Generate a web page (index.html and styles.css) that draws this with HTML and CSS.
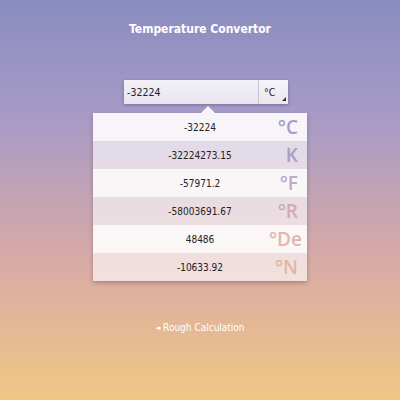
FILE: index.html
```html
<!DOCTYPE html>
<html>
<head>
<meta charset="utf-8">
<link rel="stylesheet" href="styles.css">
</head>
<body>
<div class="page">
  <h1 class="title">Temperature Convertor</h1>
  <div class="inputrow">
    <div class="field">-32224</div>
    <div class="unitsel">°C<span class="corner"></span></div>
  </div>
  <div class="card">
    <span class="pointer"></span>
    <div class="row odd"><span class="val">-32224</span><span class="unit u1">°C</span></div>
    <div class="row even"><span class="val">-32224273.15</span><span class="unit u2">K</span></div>
    <div class="row odd"><span class="val">-57971.2</span><span class="unit u3">°F</span></div>
    <div class="row even"><span class="val">-58003691.67</span><span class="unit u4">°R</span></div>
    <div class="row odd"><span class="val">48486</span><span class="unit u5">°De</span></div>
    <div class="row even"><span class="val">-10633.92</span><span class="unit u6">°N</span></div>
  </div>
  <div class="rough"><span class="tri">◄</span> Rough Calculation</div>
</div>
</body>
</html>
```
FILE: styles.css
```css
html, body {
  margin: 0;
  padding: 0;
}
body {
  width: 400px;
  height: 400px;
  background: linear-gradient(to bottom, #8a8cbf 0%, #a89bc6 30%, #d8aaa6 65%, #f0c784 100%);
  font-family: "DejaVu Sans Condensed", "DejaVu Sans", sans-serif;
  font-stretch: condensed;
  overflow: hidden;
}
.page {
  display: flex;
  flex-direction: column;
  align-items: center;
}
.title {
  margin: 21px 0 0;
  font-size: 12px;
  font-weight: bold;
  color: #fff;
  line-height: 16px;
}
.inputrow {
  margin: 43px 0 0 12px;
  display: flex;
  width: 164px;
  height: 24px;
  box-shadow: 0 1px 3px rgba(60, 50, 90, 0.45);
}
.field {
  flex: 1;
  background: linear-gradient(to bottom, #f3f1f7, #e7e4ef);
  font-size: 10.5px;
  color: #222;
  line-height: 24px;
  padding-left: 3px;
}
.unitsel {
  width: 30px;
  position: relative;
  background: linear-gradient(to bottom, #f6f5f9, #e9e6ef);
  border-left: 1px solid #c8c4d4;
  font-size: 10.5px;
  color: #222;
  line-height: 24px;
  padding-left: 5px;
  box-sizing: border-box;
}
.corner {
  position: absolute;
  right: 2px;
  bottom: 3px;
  width: 0;
  height: 0;
  border-left: 4px solid transparent;
  border-bottom: 4px solid #333;
}
.card {
  position: relative;
  margin-top: 9px;
  width: 214px;
  box-shadow: 0 2px 4px rgba(80, 50, 60, 0.35);
}
.pointer {
  position: absolute;
  top: -7px;
  left: 108px;
  width: 0;
  height: 0;
  border-left: 7px solid transparent;
  border-right: 7px solid transparent;
  border-bottom: 7px solid #f7f6fa;
}
.row {
  height: 28px;
  display: flex;
  align-items: center;
  justify-content: center;
  position: relative;
}
.odd {
  background: rgba(255, 255, 255, 0.9);
}
.even {
  background: rgba(255, 255, 255, 0.62);
}
.val {
  font-size: 10px;
  color: #222;
}
.unit {
  position: absolute;
  right: 9px;
  top: 3px;
  font-family: "Open Sans", "Noto Sans", sans-serif;
  font-stretch: normal;
  font-weight: 600;
  font-size: 19px;
  line-height: 22px;
}
.u1 { color: #a79dcc; }
.u2 { color: #ab9dc4; }
.u3 { color: #c0aac6; }
.u4 { color: #cfabb6; }
.u5 { color: #e0b6ae; right: 5px; }
.u6 { color: #e2b6a4; }
.rough {
  margin-top: 41px;
  font-size: 10px;
  color: #fff;
}
.tri {
  font-size: 7px;
  vertical-align: 1px;
}
```
